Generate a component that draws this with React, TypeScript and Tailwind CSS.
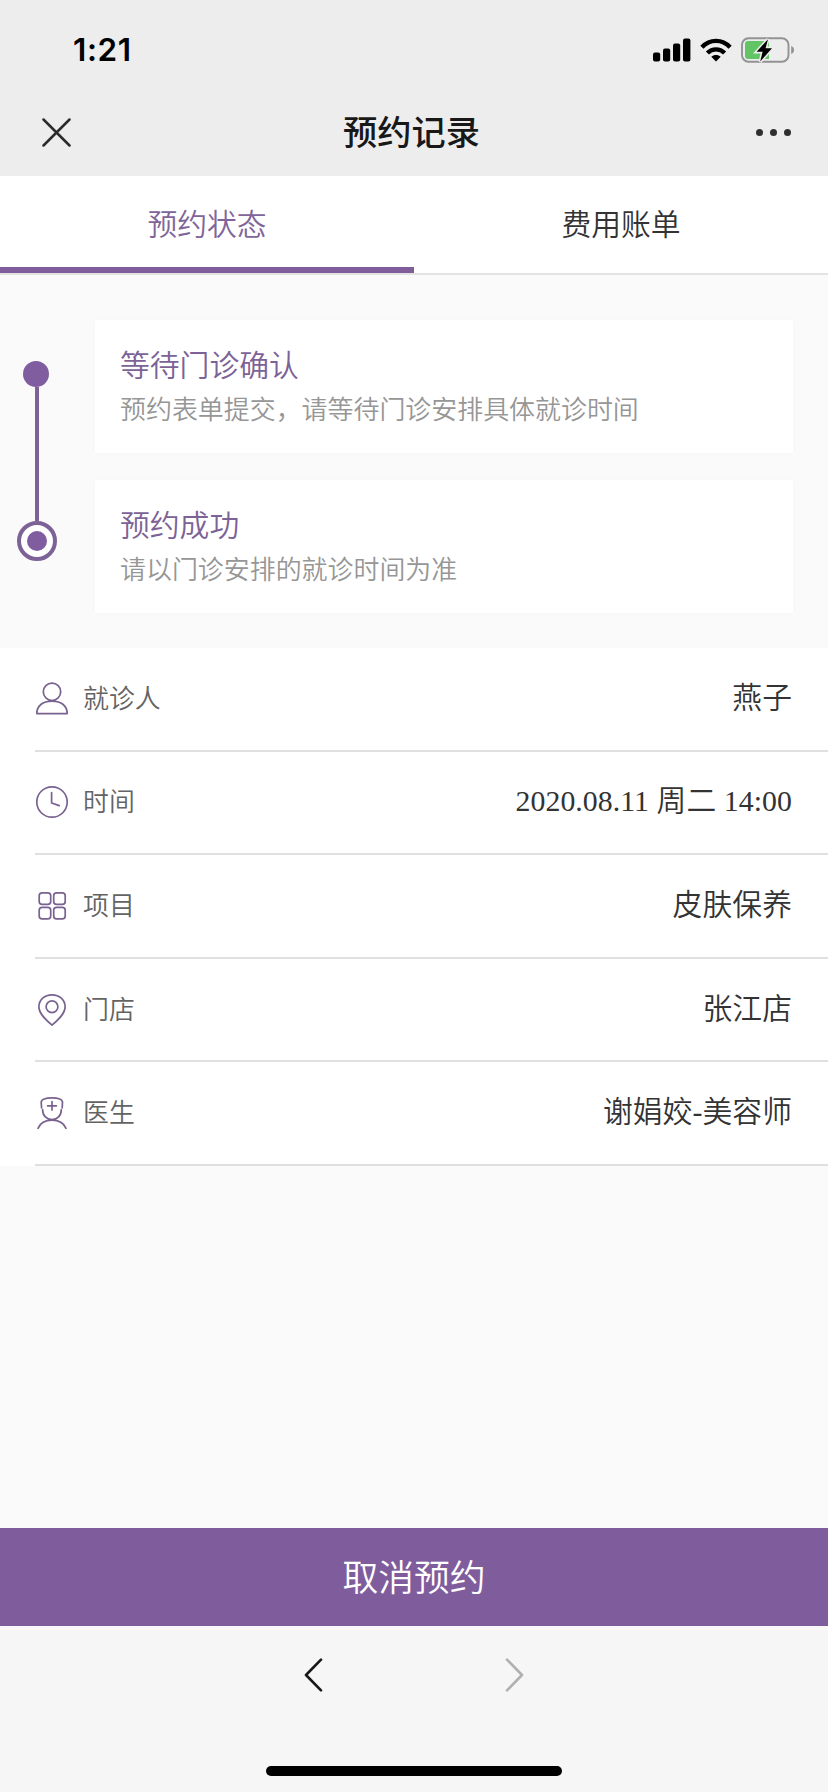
import type { ReactNode } from 'react';

const steps = [
  { title: '等待门诊确认', text: '预约表单提交，请等待门诊安排具体就诊时间' },
  { title: '预约成功', text: '请以门诊安排的就诊时间为准' },
];

const Icon = ({ children }: { children: ReactNode }) => (
  <svg
    viewBox="0 0 32 32"
    className="w-8 h-8 shrink-0 overflow-visible"
    fill="none"
    stroke="#79628f"
    strokeWidth="1.7"
    strokeLinecap="round"
    strokeLinejoin="round"
  >
    {children}
  </svg>
);

const rows = [
  {
    label: '就诊人',
    value: '燕子',
    icon: (
      <Icon>
        <circle cx="16" cy="8.8" r="8.7" />
        <path d="M0.8 30.6C0.8 23 6.5 18.1 16 18.1S31.2 23 31.2 30.6Z" />
      </Icon>
    ),
  },
  {
    label: '时间',
    value: '2020.08.11 周二 14:00',
    icon: (
      <Icon>
        <circle cx="16" cy="16" r="15.2" />
        <path d="M15.6 6.5V17L23.2 19.6" />
      </Icon>
    ),
  },
  {
    label: '项目',
    value: '皮肤保养',
    icon: (
      <Icon>
        <rect x="3.2" y="2.8" width="11.5" height="11.5" rx="2.9" />
        <rect x="17.7" y="2.8" width="11.5" height="11.5" rx="2.9" />
        <rect x="3.2" y="17.3" width="11.5" height="11.5" rx="2.9" />
        <rect x="17.7" y="17.3" width="11.5" height="11.5" rx="2.9" />
      </Icon>
    ),
  },
  {
    label: '门店',
    value: '张江店',
    icon: (
      <Icon>
        <path d="M16 31.2C9.5 25.6 2.9 19.6 2.9 13C2.9 5.6 8.6 0.8 16 0.8S29.1 5.6 29.1 13C29.1 19.6 22.5 25.6 16 31.2Z" />
        <circle cx="16" cy="12.8" r="5.9" />
      </Icon>
    ),
  },
  {
    label: '医生',
    value: '谢娟姣-美容师',
    icon: (
      <Icon>
        <path d="M5.6 10.9L5.2 5.3C5.2 2.3 9.5 0.9 16 0.9S26.5 2.3 26.5 5.3L26.2 10.9" />
        <path d="M6.6 12.7C6.6 18.8 10.6 22.6 16 22.6S25.3 18.8 25.3 12.7" />
        <path d="M16 4.6V13M11.6 8.8H20.4" />
        <path d="M2 31.3C4 26.7 9 23.2 16 23.2S28 26.7 30 31.3" />
      </Icon>
    ),
  },
];

const StatusBar = () => (
  <div className="flex h-[88px] items-center justify-between pt-[11px] pl-[73px] pr-[33px]">
    <span className="font-['Inter'] text-[31.5px] leading-none font-semibold tracking-[0.6px] text-black">1:21</span>
    <div className="flex items-center">
      <svg viewBox="0 0 38 24" className="w-[38px] h-6" fill="#000">
        <rect x="0" y="14.5" width="7.2" height="9" rx="2" />
        <rect x="10" y="10.5" width="7.2" height="13" rx="2" />
        <rect x="20" y="5.5" width="7.2" height="18" rx="2" />
        <rect x="30" y="0.5" width="7.4" height="23" rx="2" />
      </svg>
      <svg viewBox="0 0 32 24" className="ml-[9px] w-8 h-6" fill="none" stroke="#000" strokeWidth="4.4">
        <path d="M1.9 9.2C9.8 0.8 22.2 0.8 30.1 9.2" />
        <path d="M7.4 15C12.2 10.2 19.8 10.2 24.6 15" />
        <path d="M16 23.5L11.3 18.7C13.9 16.5 18.1 16.5 20.7 18.7Z" fill="#000" stroke="none" />
      </svg>
      <svg viewBox="0 0 54 26" className="ml-[9px] w-[54px] h-[26px]">
        <rect x="1" y="1.3" width="46.5" height="23.4" rx="6.5" fill="none" stroke="#929292" strokeWidth="1.9" />
        <path d="M50.2 9C54 10.2 54 15.8 50.2 17Z" fill="#929292" />
        <path d="M7 4H28V22H7a3 3 0 0 1-3-3V7a3 3 0 0 1 3-3Z" fill="#61c566" />
        <path
          d="M27 2.2L15.6 14.8H21.6L19.2 24.6L31 11.2H24.6Z"
          fill="#000"
          stroke="#ededed"
          strokeWidth="3.2"
          paintOrder="stroke"
        />
      </svg>
    </div>
  </div>
);

const NavBar = () => (
  <div className="flex h-[88px] items-center justify-between pl-[42px] pr-[37px]">
    <svg viewBox="0 0 29 29" className="w-[29px] h-[29px]" stroke="#2b2b2b" strokeWidth="2.5" strokeLinecap="round">
      <path d="M1.5 1.5L27.5 27.5M27.5 1.5L1.5 27.5" />
    </svg>
    <h1 className="mr-[4px] pb-[3px] text-[34.2px] leading-none font-medium text-[#181818]">预约记录</h1>
    <div className="flex gap-[7px]">
      <span className="size-[7px] rounded-full bg-[#2f2f2f]" />
      <span className="size-[7px] rounded-full bg-[#2f2f2f]" />
      <span className="size-[7px] rounded-full bg-[#2f2f2f]" />
    </div>
  </div>
);

const App = () => {
  return (
    <div className="flex flex-col h-[1792px] w-[828px] overflow-hidden bg-[#fafafa] font-['Noto_Sans_CJK_SC',sans-serif] font-[350]">
      <header className="h-[176px] shrink-0 bg-[#ededed]">
        <StatusBar />
        <NavBar />
      </header>

      {/* Tabs */}
      <nav className="flex h-[99px] shrink-0 border-b-2 border-[#e3e3e3] bg-white text-[29.8px]">
        <button className="flex-1 border-b-6 border-[#7f5d9b] pt-px text-[#80659a]">预约状态</button>
        <button className="flex-1 border-b-6 border-transparent pt-px text-[#333333]">费用账单</button>
      </nav>

      {/* Progress */}
      <section className="flex h-[373px] shrink-0 pl-[17px] pr-[35px]">
        <div className="flex w-10 flex-col items-center pt-[86px]">
          <span className="ml-[6px] size-[26px] shrink-0 self-start rounded-full bg-[#7f5d9f]" />
          <span className="h-[134px] w-1 bg-[#7c6296]" />
          <span className="flex size-10 shrink-0 items-center justify-center rounded-full border-4 border-[#7c6296] bg-white">
            <span className="size-5 rounded-full bg-[#7f5d9f]" />
          </span>
        </div>
        <div className="ml-[38px] flex flex-1 flex-col gap-[27px] pt-[45px]">
          {steps.map((step) => (
            <div key={step.title} className="h-[133px] bg-white px-[25px] pt-[21px] shadow-[0_0_8px_rgba(0,0,0,0.025)]">
              <h2 className="text-[29.8px] leading-[44px] text-[#7c6296]">{step.title}</h2>
              <p className="text-[25.95px] leading-[45px] text-[#969696]">{step.text}</p>
            </div>
          ))}
        </div>
      </section>

      {/* Details */}
      <ul className="shrink-0 bg-white pl-[35px]">
        {rows.map((row) => (
          <li
            key={row.label}
            className="flex h-[103.6px] items-center border-b-2 border-[#e0e0e0] pl-px pr-[36px]"
          >
            {row.icon}
            <span className="ml-[15px] pb-[4px] text-[25.9px] leading-none text-[#636363]">{row.label}</span>
            <span className="ml-auto pb-[2px] font-['Liberation_Serif','Noto_Sans_CJK_SC',serif] text-[29.8px] leading-none tracking-[0.06px] text-[#333333]">
              {row.value}
            </span>
          </li>
        ))}
      </ul>

      <button className="mt-auto h-[98px] shrink-0 bg-[#7f5d9d] pb-[3px] text-[35.8px] text-white">取消预约</button>

      {/* Browser bar */}
      <footer className="flex h-[166px] shrink-0 flex-col items-center bg-[#f6f6f6] border-t-4 border-[#faf7f8]">
        <div className="flex w-[220px] justify-between pt-[28px]">
          <svg viewBox="0 0 19 34" className="w-[19px] h-[34px]" fill="none" stroke="#181818" strokeWidth="2.6" strokeLinecap="round" strokeLinejoin="round">
            <path d="M17 1.7L2 17L17 32.3" />
          </svg>
          <svg viewBox="0 0 19 34" className="w-[19px] h-[34px]" fill="none" stroke="#b0b0b0" strokeWidth="2.6" strokeLinecap="round" strokeLinejoin="round">
            <path d="M2 1.7L17 17L2 32.3" />
          </svg>
        </div>
        <div className="mt-auto mb-4 h-[10px] w-[296px] rounded-full bg-black" />
      </footer>
    </div>
  );
};

export default App;
